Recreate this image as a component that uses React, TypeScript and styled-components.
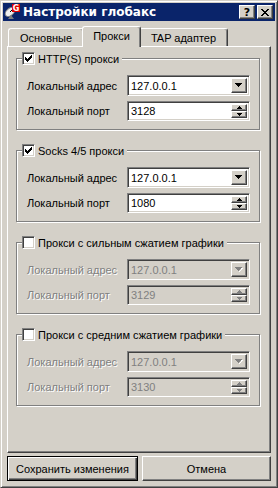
import React from 'react';
import styled, { createGlobalStyle, css } from 'styled-components';

const FACE = '#d4d0c8';
const SHADOW = '#808080';
const DARK = '#404040';
const HILITE = '#ffffff';
const TITLE = '#0a246a';

type ProxyGroup = {
  title: string;
  checked: boolean;
  address: string;
  port: string;
};

const groups: ProxyGroup[] = [
  { title: 'HTTP(S) прокси', checked: true, address: '127.0.0.1', port: '3128' },
  { title: 'Socks 4/5 прокси', checked: true, address: '127.0.0.1', port: '1080' },
  { title: 'Прокси с сильным сжатием графики', checked: false, address: '127.0.0.1', port: '3129' },
  { title: 'Прокси с средним сжатием графики', checked: false, address: '127.0.0.1', port: '3130' },
];

const tabs = [
  { text: 'Основные', width: 76 },
  { text: 'Прокси', width: 55 },
  { text: 'TAP адаптер', width: 89 },
];

const GlobalStyle = createGlobalStyle`
  html, body {
    margin: 0;
    padding: 0;
    background: ${FACE};
  }
  * {
    box-sizing: border-box;
  }
  body {
    font-family: Tahoma, "Liberation Sans", sans-serif;
    font-size: 11px;
    color: #000;
  }
`;

const raised = css`
  border: 1px solid;
  border-color: ${HILITE} ${DARK} ${DARK} ${HILITE};
  box-shadow: inset -1px -1px ${SHADOW};
  background: ${FACE};
`;

const sunken = css`
  border: 1px solid;
  border-color: ${SHADOW} ${HILITE} ${HILITE} ${SHADOW};
  box-shadow: inset 1px 1px ${DARK}, inset -1px -1px ${FACE};
`;

const disabledText = css`
  color: ${SHADOW};
  text-shadow: 1px 1px ${HILITE};
`;

const S = {
  Window: styled.div`
    width: 278px;
    height: 488px;
    display: flex;
    flex-direction: column;
    padding: 2px;
    background: ${FACE};
    border: 1px solid;
    border-color: ${FACE} ${DARK} ${DARK} ${FACE};
    box-shadow: inset 1px 1px ${HILITE}, inset -1px -1px ${SHADOW};
  `,
  TitleBar: styled.div`
    display: flex;
    align-items: center;
    height: 18px;
    padding: 0 2px 0 1px;
    background: ${TITLE};
  `,
  Title: styled.span`
    margin-left: 3px;
    color: #fff;
    font-family: "DejaVu Sans", sans-serif;
    font-size: 12px;
    font-weight: bold;
    white-space: nowrap;
  `,
  TitleButtons: styled.div`
    display: flex;
    gap: 2px;
    margin-left: auto;
  `,
  TitleButton: styled.div`
    ${raised};
    width: 16px;
    height: 14px;
    display: flex;
    align-items: center;
    justify-content: center;
    font-family: "DejaVu Sans", sans-serif;
    font-size: 11px;
    font-weight: bold;
    line-height: 1;
  `,
  Content: styled.div`
    flex: 1;
    display: flex;
    flex-direction: column;
    padding: 5px 4px 4px;
  `,
  TabStrip: styled.div`
    display: flex;
    align-items: flex-end;
    height: 20px;
    padding-left: 1px;
  `,
  Tab: styled.div<{ $active?: boolean; $width: number }>`
    position: relative;
    width: ${({ $width }) => $width}px;
    height: 18px;
    display: flex;
    align-items: center;
    justify-content: center;
    border-left: 1px solid ${HILITE};
    border-top: 1px solid ${HILITE};
    border-right: 1px solid ${DARK};
    border-radius: 3px 3px 0 0;
    box-shadow: inset -1px 0 ${SHADOW};
    background: ${FACE};
    white-space: nowrap;

    ${({ $active, $width }) =>
      $active &&
      css`
        z-index: 1;
        width: ${$width + 4}px;
        height: 21px;
        margin: 0 -2px -1px;
        padding-bottom: 2px;
      `}
  `,
  Panel: styled.div`
    height: 407px;
    display: flex;
    flex-direction: column;
    gap: 20px;
    padding: 11px 10px 0 8px;
    border: 1px solid;
    border-color: ${HILITE} ${DARK} ${DARK} ${HILITE};
    box-shadow: inset -1px -1px ${SHADOW};
  `,
  Group: styled.div`
    position: relative;
    height: 72px;
    padding: 16px 0 8px 10px;
    border: 1px solid ${SHADOW};
    box-shadow: inset 1px 1px ${HILITE}, 1px 1px ${HILITE};
  `,
  Legend: styled.label`
    position: absolute;
    top: -7px;
    left: 5px;
    display: flex;
    align-items: center;
    gap: 3px;
    padding-right: 3px;
    height: 13px;
    background: ${FACE};
    white-space: nowrap;
  `,
  CheckBox: styled.span`
    ${sunken};
    width: 13px;
    height: 13px;
    display: flex;
    align-items: center;
    justify-content: center;
    background: #fff;
  `,
  Fields: styled.div`
    display: grid;
    grid-template-columns: 100px 123px;
    grid-template-rows: 21px 20px;
    row-gap: 5px;
    align-items: center;
  `,
  FieldLabel: styled.span<{ $disabled?: boolean }>`
    white-space: nowrap;
    ${({ $disabled }) => $disabled && disabledText};
  `,
  Field: styled.div<{ $disabled?: boolean }>`
    ${sunken};
    height: 100%;
    display: flex;
    align-items: stretch;
    padding: 2px;
    background: ${({ $disabled }) => ($disabled ? FACE : '#fff')};
  `,
  FieldValue: styled.span<{ $disabled?: boolean }>`
    flex: 1;
    display: flex;
    align-items: center;
    padding-left: 1px;
    ${({ $disabled }) => $disabled && css`color: ${SHADOW};`};
  `,
  DropButton: styled.div`
    ${raised};
    width: 16px;
    display: flex;
    align-items: center;
    justify-content: center;
  `,
  SpinButtons: styled.div`
    width: 16px;
    display: flex;
    flex-direction: column;
  `,
  SpinButton: styled.div`
    ${raised};
    flex: 1;
    display: flex;
    align-items: center;
    justify-content: center;
  `,
  Buttons: styled.div`
    display: grid;
    grid-template-columns: 131px 1fr;
    gap: 4px;
    height: 25px;
    margin-top: 3px;
  `,
  Button: styled.button<{ $default?: boolean }>`
    ${raised};
    font: inherit;
    color: #000;
    padding: 0;
    text-align: center;

    ${({ $default }) =>
      $default &&
      css`
        border-color: #000;
        box-shadow: inset 1px 1px ${HILITE}, inset -1px -1px ${DARK}, inset -2px -2px ${SHADOW};
      `}
  `,
};

const AppIcon = () => (
  <svg width="16" height="16" viewBox="0 0 16 16">
    <ellipse cx="6" cy="8" rx="5.5" ry="3.5" transform="rotate(-40 6 8)" fill="#f0f0f0" stroke="#808080" />
    <line x1="6" y1="8" x2="10" y2="4" stroke="#000" />
    <path d="M4 15h6l-3-4z" fill="#808080" />
    <rect x="8" y="0" width="8" height="8" fill="#e00000" />
    <text x="12" y="7" fontSize="8" fontWeight="bold" fill="#fff" textAnchor="middle" fontFamily="DejaVu Sans, sans-serif">
      G
    </text>
  </svg>
);

const CloseGlyph = () => (
  <svg width="8" height="7" viewBox="0 0 8 7" shapeRendering="crispEdges">
    <path d="M0 0h2v1h-2zM6 0h2v1h-2zM1 1h2v1h-2zM5 1h2v1h-2zM2 2h4v1h-4zM3 3h2v1h-2zM2 4h4v1h-4zM1 5h2v1h-2zM5 5h2v1h-2zM0 6h2v1h-2zM6 6h2v1h-2z" fill="#000" />
  </svg>
);

const CheckGlyph = () => (
  <svg width="7" height="7" viewBox="0 0 7 7" shapeRendering="crispEdges">
    <path d="M6 0h1v1h-1zM5 1h2v1h-2zM0 2h1v1h-1zM4 2h3v1h-3zM0 3h2v1h-2zM3 3h3v1h-3zM0 4h5v1h-5zM1 5h3v1h-3zM2 6h1v1h-1z" fill="#000" />
  </svg>
);

const DownArrow = ({ disabled }: { disabled?: boolean }) => (
  <svg width="8" height="5" viewBox="0 0 8 5" shapeRendering="crispEdges">
    {disabled && <path d="M1 1h7v1h-1v1h-1v1h-1v1h-1v-1h1v-1h1v-1h1z" fill={HILITE} />}
    <path d="M0 0h7v1h-1v1h-1v1h-1v1h-1v-1h-1v-1h-1v-1h-1z" fill={disabled ? SHADOW : '#000'} />
  </svg>
);

const SpinArrow = ({ up, disabled }: { up?: boolean; disabled?: boolean }) => (
  <svg width="5" height="3" viewBox="0 0 5 3" shapeRendering="crispEdges" style={up ? undefined : { transform: 'scaleY(-1)' }}>
    <path d="M2 0h1v1h1v1h1v1h-5v-1h1v-1h1z" fill={disabled ? SHADOW : '#000'} />
  </svg>
);

const ProxyBox = ({ title, checked, address, port }: ProxyGroup) => {
  const disabled = !checked;
  return (
    <S.Group>
      <S.Legend>
        <S.CheckBox>{checked && <CheckGlyph />}</S.CheckBox>
        {title}
      </S.Legend>
      <S.Fields>
        <S.FieldLabel $disabled={disabled}>Локальный адрес</S.FieldLabel>
        <S.Field $disabled={disabled}>
          <S.FieldValue $disabled={disabled}>{address}</S.FieldValue>
          <S.DropButton>
            <DownArrow disabled={disabled} />
          </S.DropButton>
        </S.Field>
        <S.FieldLabel $disabled={disabled}>Локальный порт</S.FieldLabel>
        <S.Field $disabled={disabled}>
          <S.FieldValue $disabled={disabled}>{port}</S.FieldValue>
          <S.SpinButtons>
            <S.SpinButton>
              <SpinArrow up disabled={disabled} />
            </S.SpinButton>
            <S.SpinButton>
              <SpinArrow disabled={disabled} />
            </S.SpinButton>
          </S.SpinButtons>
        </S.Field>
      </S.Fields>
    </S.Group>
  );
};

const App = () => {
  const activeTab = 1;

  return (
    <>
      <GlobalStyle />
      <S.Window>
        <S.TitleBar>
          <AppIcon />
          <S.Title>Настройки глобакс</S.Title>
          <S.TitleButtons>
            <S.TitleButton>?</S.TitleButton>
            <S.TitleButton>
              <CloseGlyph />
            </S.TitleButton>
          </S.TitleButtons>
        </S.TitleBar>
        <S.Content>
          <S.TabStrip>
            {tabs.map((tab, index) => (
              <S.Tab key={tab.text} $width={tab.width} $active={index === activeTab}>
                {tab.text}
              </S.Tab>
            ))}
          </S.TabStrip>
          <S.Panel>
            {groups.map((group) => (
              <ProxyBox key={group.title} {...group} />
            ))}
          </S.Panel>
          <S.Buttons>
            <S.Button $default>Сохранить изменения</S.Button>
            <S.Button>Отмена</S.Button>
          </S.Buttons>
        </S.Content>
      </S.Window>
    </>
  );
};

export default App;
